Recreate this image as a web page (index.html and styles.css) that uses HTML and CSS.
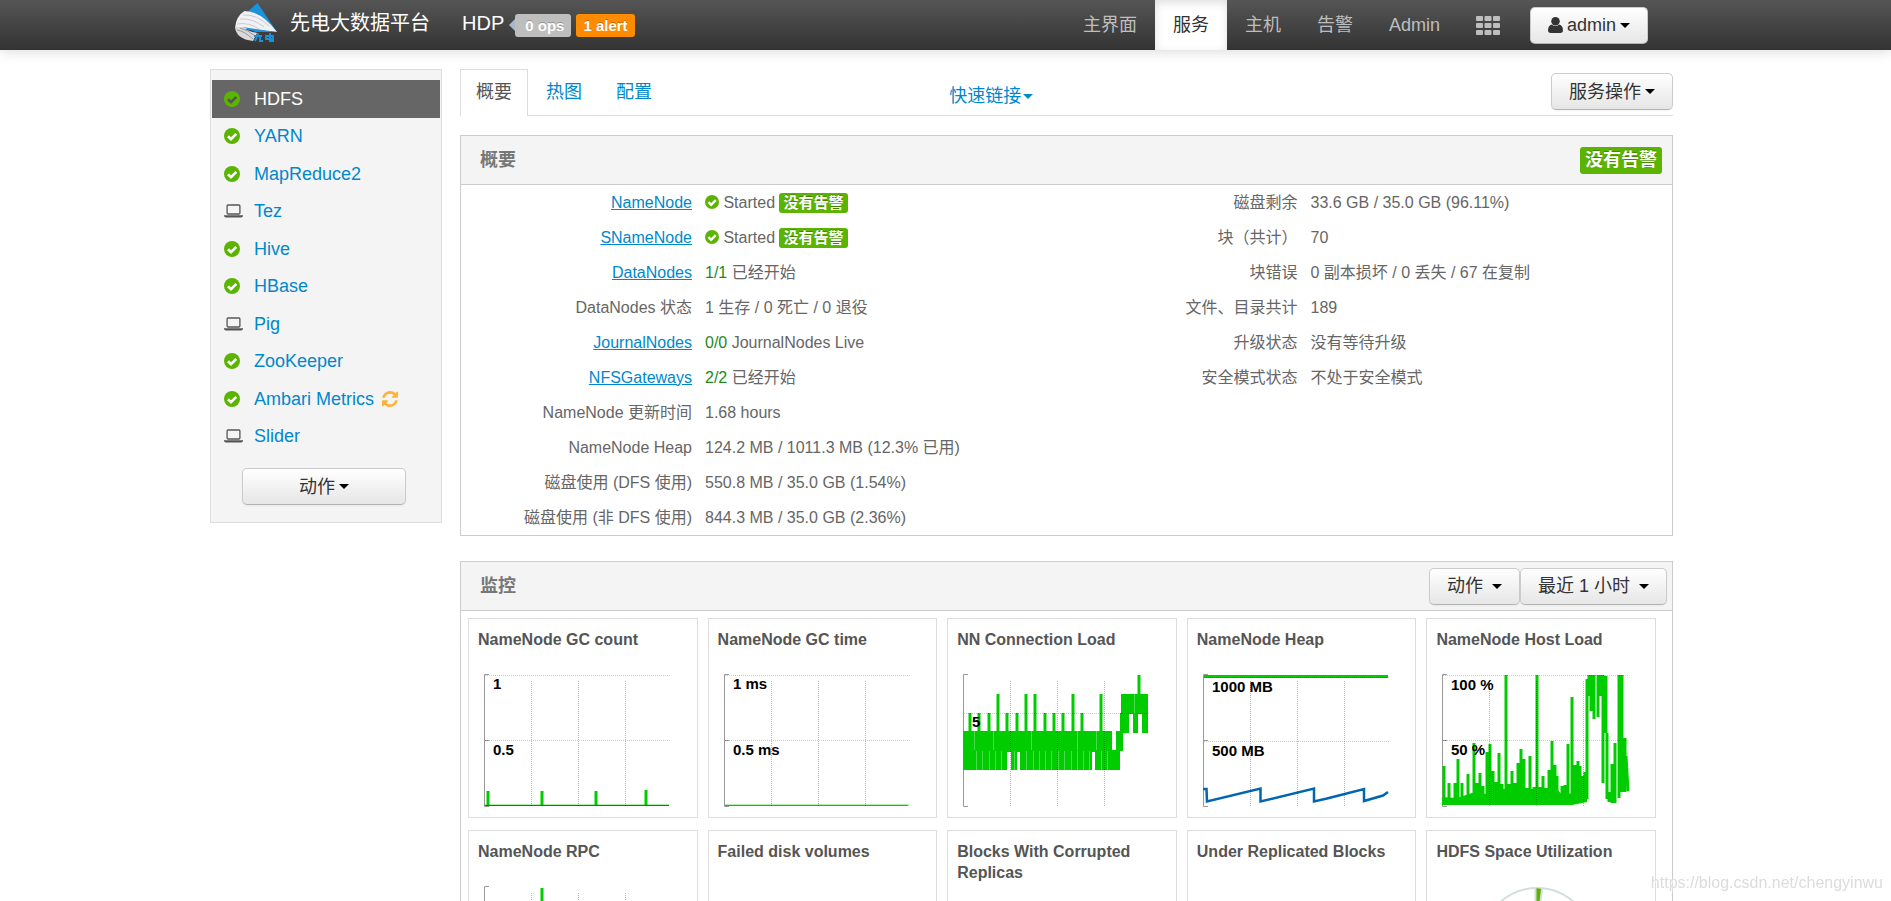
FILE: index.html
```html
<!DOCTYPE html>
<html lang="zh-CN">
<head>
<meta charset="utf-8">
<title>HDFS</title>
<link rel="stylesheet" href="styles.css">
</head>
<body>
<svg class="sprite" aria-hidden="true">
  <symbol id="i-ok" viewBox="0 0 16 16"><circle cx="8" cy="8" r="8" fill="#5ab400"/><path d="M4 8.2 7 11.2 12.3 5.9" fill="none" stroke="currentColor" stroke-width="2.7"/></symbol>
  <symbol id="i-laptop" viewBox="0 0 19 14"><rect x="3.1" y="1" width="12.8" height="9" rx="1" fill="none" stroke="currentColor" stroke-width="1.3"/><path d="M0 11.2h19v.8q-.3 1.4-2 1.4H2q-1.700 0-2-1.400z" fill="currentColor"/></symbol>
  <symbol id="i-refresh" viewBox="0 0 1536 1536"><path fill="currentColor" d="M1511 928q0 5-1 7-64 268-268 434.500t-478 166.500q-146 0-282.500-55t-243.500-157l-129 129q-19 19-45 19t-45-19-19-45v-448q0-26 19-45t45-19h448q26 0 45 19t19 45-19 45l-137 137q71 66 161 102t187 36q134 0 250-65t186-179q11-17 53-117 8-23 30-23h192q13 0 22.500 9.500t9.500 22.500zm25-800v448q0 26-19 45t-45 19h-448q-26 0-45-19t-19-45 19-45l138-138q-148-137-349-137-134 0-250 65t-186 179q-11 17-53 117-8 23-30 23h-199q-13 0-22.500-9.500t-9.500-22.500v-7q65-268 270-434.500t480-166.500q146 0 284 55.500t245 156.500l130-129q19-19 45-19t45 19 19 45z"/></symbol>
  <symbol id="i-user" viewBox="0 0 14 15"><circle cx="7" cy="4" r="4" fill="currentColor"/><path d="M3.500 7Q7 10 10.500 7 14 8 14 12.500 14 15 11.500 15h-9Q0 15 0 12.500 0 8 3.500 7z" fill="currentColor"/></symbol>
  <symbol id="i-grid" viewBox="0 0 24 19"><g fill="currentColor"><rect width="7" height="5" rx="1"/><rect x="8.500" width="7" height="5" rx="1"/><rect x="17" width="7" height="5" rx="1"/><rect y="7" width="7" height="5" rx="1"/><rect x="8.500" y="7" width="7" height="5" rx="1"/><rect x="17" y="7" width="7" height="5" rx="1"/><rect y="14" width="7" height="5" rx="1"/><rect x="8.500" y="14" width="7" height="5" rx="1"/><rect x="17" y="14" width="7" height="5" rx="1"/></g></symbol>
  <symbol id="axis" viewBox="0 0 188 137"><path d="M5 3.500H.5V135.500H5M.5 69.500H5" fill="none" stroke="#999"/></symbol>
  <symbol id="vgrid" viewBox="0 0 188 137"><path d="M47.500 10V135M94.500 10V135M141.500 10V135" fill="none" stroke="#000" stroke-opacity=".3" stroke-dasharray="1 1"/></symbol>
  <symbol id="hgrid" viewBox="0 0 188 137"><path d="M1 4.500H187M1 69.500H187" fill="none" stroke="#000" stroke-opacity=".2" stroke-dasharray="1 1"/></symbol>
</svg>

<header class="navbar">
  <div class="wrap nav-inner">
    <a class="brand" href="#">
      <svg class="logo" viewBox="0 0 42 40" aria-hidden="true">
        <path d="M10 11 22.500 0 42 29 12 24z" fill="#1a93dc"/>
        <path d="M9.500 8Q26 8 42 29L0 25Q1 13 9.500 8z" fill="#f1f1f4"/>
        <path d="M8 12Q22 11 34 23M5 16Q18 15 29 24M2 21Q14 19 24 26" fill="none" stroke="#bfc0c8" stroke-width=".8"/>
        <path d="M7 24 42 29H21z" fill="#1a93dc"/>
        <path d="M0 24Q1 36 18 38L22 30Q12 28 7 24z" fill="#d9d9dc"/>
        <path d="M2 27Q9 28 18 36M5 25Q13 27 20 33" fill="none" stroke="#8f8f96" stroke-width=".9"/>
        <path d="M19 33h8M23 30v4M20 38l2-4M25 34v4h3M31 33h7v3h-7zM35 30v8h4" fill="none" stroke="#1a93dc" stroke-width="1.800"/>
      </svg>
      <span>先电大数据平台</span>
    </a>
    <a class="cluster" href="#">HDP</a>
    <a class="tag tag-ops" href="#">0 ops</a>
    <a class="tag tag-alert" href="#">1 alert</a>
    <nav class="menu">
      <a href="#">主界面</a><a class="active" href="#">服务</a><a href="#">主机</a><a href="#">告警</a><a href="#">Admin</a><a href="#" aria-label="Views"><svg class="grid-icon"><use href="#i-grid"/></svg></a>
    </nav>
    <button class="btn btn-user" type="button"><svg class="user-icon"><use href="#i-user"/></svg><span>admin</span><i class="caret"></i></button>
  </div>
</header>

<div class="wrap page">
  <aside class="sidebar">
    <ul class="services">
      <li class="active"><a href="#"><svg><use href="#i-ok"/></svg>HDFS</a></li>
      <li><a href="#"><svg><use href="#i-ok"/></svg>YARN</a></li>
      <li><a href="#"><svg><use href="#i-ok"/></svg>MapReduce2</a></li>
      <li><a href="#"><svg class="laptop"><use href="#i-laptop"/></svg>Tez</a></li>
      <li><a href="#"><svg><use href="#i-ok"/></svg>Hive</a></li>
      <li><a href="#"><svg><use href="#i-ok"/></svg>HBase</a></li>
      <li><a href="#"><svg class="laptop"><use href="#i-laptop"/></svg>Pig</a></li>
      <li><a href="#"><svg><use href="#i-ok"/></svg>ZooKeeper</a></li>
      <li><a href="#"><svg><use href="#i-ok"/></svg>Ambari Metrics<svg class="refresh"><use href="#i-refresh"/></svg></a></li>
      <li><a href="#"><svg class="laptop"><use href="#i-laptop"/></svg>Slider</a></li>
    </ul>
    <button class="btn btn-side" type="button"><span>动作</span><i class="caret"></i></button>
  </aside>

  <main class="content">
    <div class="tabbar">
      <nav class="tabs"><a class="active" href="#">概要</a><a href="#">热图</a><a href="#">配置</a></nav>
      <div class="tab-tools">
        <a class="quick" href="#">快速链接<i class="caret"></i></a>
        <button class="btn" type="button"><span>服务操作</span><i class="caret"></i></button>
      </div>
    </div>

    <section class="panel">
      <div class="panel-head"><h2>概要</h2><span class="label label-lg">没有告警</span></div>
      <div class="summary">
        <table>
          <tr><th><a href="#">NameNode</a></th><td><svg class="ok"><use href="#i-ok"/></svg> Started <span class="label">没有告警</span></td></tr>
          <tr><th><a href="#">SNameNode</a></th><td><svg class="ok"><use href="#i-ok"/></svg> Started <span class="label">没有告警</span></td></tr>
          <tr><th><a href="#">DataNodes</a></th><td><b>1/1</b> 已经开始</td></tr>
          <tr><th>DataNodes 状态</th><td>1 生存 / 0 死亡 / 0 退役</td></tr>
          <tr><th><a href="#">JournalNodes</a></th><td><b>0/0</b> JournalNodes Live</td></tr>
          <tr><th><a href="#">NFSGateways</a></th><td><b>2/2</b> 已经开始</td></tr>
          <tr><th>NameNode 更新时间</th><td>1.68 hours</td></tr>
          <tr><th>NameNode Heap</th><td>124.2 MB / 1011.3 MB (12.3% 已用)</td></tr>
          <tr><th>磁盘使用 (DFS 使用)</th><td>550.8 MB / 35.0 GB (1.54%)</td></tr>
          <tr><th>磁盘使用 (非 DFS 使用)</th><td>844.3 MB / 35.0 GB (2.36%)</td></tr>
        </table>
        <table>
          <tr><th>磁盘剩余</th><td>33.6 GB / 35.0 GB (96.11%)</td></tr>
          <tr><th>块（共计）</th><td>70</td></tr>
          <tr><th>块错误</th><td>0 副本损坏 / 0 丢失 / 67 在复制</td></tr>
          <tr><th>文件、目录共计</th><td>189</td></tr>
          <tr><th>升级状态</th><td>没有等待升级</td></tr>
          <tr><th>安全模式状态</th><td>不处于安全模式</td></tr>
        </table>
      </div>
    </section>

    <section class="panel">
      <div class="panel-head panel-head-tools"><h2>监控</h2>
        <div class="tools">
          <button class="btn btn-wide" type="button"><span>动作</span><i class="caret"></i></button><button class="btn btn-wide" type="button"><span>最近 1 小时</span><i class="caret"></i></button>
        </div>
      </div>
      <div class="cards">
        <article class="card"><h3>NameNode GC count</h3>
          <svg class="chart" viewBox="0 0 188 137">
            <use href="#axis"/>
            <path class="g3" d="M4 120V134M58 120V134M112 120V134M162 119V134"/>
            <path class="halo" d="M1 134H185"/><path d="M1 134.500H185" stroke="#0066b3"/>
            <use href="#hgrid"/><use href="#vgrid"/>
            <text x="9" y="18">1</text><text x="9" y="84">0.5</text>
          </svg></article>
        <article class="card"><h3>NameNode GC time</h3>
          <svg class="chart" viewBox="0 0 188 137">
            <use href="#axis"/>
            <path class="halo" d="M1 134H185"/><path d="M1 134.500H184" stroke="#00cc00"/>
            <use href="#hgrid"/><use href="#vgrid"/>
            <text x="9" y="18">1 ms</text><text x="9" y="84">0.5 ms</text>
          </svg></article>
        <article class="card"><h3>NN Connection Load</h3>
          <svg class="chart" viewBox="0 0 188 137">
            <use href="#axis"/>
            <path fill="#00cc00" d="M0 60H149V79H153V60H157V42H158V23H185V43H185V62H179V43H175V62H170V43H166V62H160V80H157V99H132V81H129V99H57V81H54V99H48V81H44V99H0z"/>
            <path class="g3" d="M7 42V61M16 42V61M26 42V61M35 23V61M44 42V61M54 42V61M63 23V61M72 23V61M82 42V61M91 42V61M100 42V61M110 23V61M119 42V61M138 23V61M176 4V24"/>
            <path d="M11.500 60V79M30.500 60V79M68.500 60V79M114.500 60V79M133.500 60V79M171.500 23V43M13.500 80V99M19.500 80V99M26.500 80V99M32.500 80V99M38.500 80V99M51.500 80V99M63.500 80V99M70.500 80V99M76.500 80V99M82.500 80V99M88.500 80V99M95.500 80V99M101.500 80V99M108.500 80V99M114.500 80V99M120.500 80V99M126.500 80V99M138.500 80V99M144.500 80V99" stroke="#fff" stroke-opacity=".3"/>
            <path d="M1 42.500H187" stroke="#000" stroke-opacity=".2" stroke-dasharray="1 1"/><use href="#vgrid"/>
            <text x="9" y="56">5</text>
          </svg></article>
        <article class="card"><h3>NameNode Heap</h3>
          <svg class="chart" viewBox="0 0 188 137">
            <use href="#axis"/>
            <path d="M1 5.500H185" stroke="#00cc00" stroke-width="3"/>
            <path d="M0 118H3.500L4 130.500 57.500 117.500V130.500L111 117.500V130.500L124 127.500 161 118V130L180 124.500 185 121" fill="none" stroke="#0066b3" stroke-width="2.500"/>
            <path d="M1 6.500H187M1 70.500H187" stroke="#000" stroke-opacity=".2" stroke-dasharray="1 1"/><use href="#vgrid"/>
            <text x="9" y="21">1000 MB</text><text x="9" y="85">500 MB</text>
          </svg></article>
        <article class="card"><h3>NameNode Host Load</h3>
          <svg class="chart" viewBox="0 0 188 137">
            <use href="#axis"/>
            <path fill="#00cc00" d="M0 126 15 127 30 122 45 123 60 118H115L121 125 130 122 145 112V131L130 134H0z"/>
            <path class="g3" d="M2 95V134M7 112V134M13 112V134M16 88V134M20 112V134M26 103V134M32 72V134M35 112V134M38 102V134M41 115V134M45 81V134M48 73V134M51 100V134M54 111V134M57 82V134M60 113V134M64 4V134M67 113V134M70 100V134M73 112V134M76 92V134M79 78V134M82 88V134M85 117V134M88 85V134M92 116V134M95 4V134M98 116V134M101 105V134M104 117V134M107 99V134M110 70V134M113 94V134M115 105V134M120 115V134M123 114V134M126 73V134M130 26V130M133 94V130M136 90V132M138 95V132M141 105V131M143 101V128M145 8V128M147 4V25M149 4V40M152 4V48M156 4V46M159 4V25M161 4V112M164 5V62M165 62V128M167 121V131M170 93V132M173 72V132M177 4V127M180 4V121M183 67V121"/>
            <path d="M184 85 186 120" stroke="#00cc00" stroke-width="3"/>
            <use href="#hgrid"/><use href="#vgrid"/>
            <text x="9" y="19">100 %</text><text x="9" y="84">50 %</text>
          </svg></article>
        <article class="card"><h3>NameNode RPC</h3>
          <svg class="chart" viewBox="0 0 188 137"><use href="#axis"/><path class="g3" d="M58 5V134"/><use href="#vgrid"/></svg></article>
        <article class="card"><h3>Failed disk volumes</h3></article>
        <article class="card"><h3>Blocks With Corrupted Replicas</h3></article>
        <article class="card"><h3>Under Replicated Blocks</h3></article>
        <article class="card"><h3>HDFS Space Utilization</h3>
          <svg class="chart" viewBox="0 0 188 137"><circle cx="95" cy="60" r="55" fill="none" stroke="#d5dddd" stroke-width="2"/><path d="M93.500 5V60L100 6" fill="#5ab400" stroke="#d5dddd" stroke-width="2"/></svg></article>
      </div>
    </section>
  </main>
</div>
<div class="watermark">https://blog.csdn.net/chengyinwu</div>
</body>
</html>
```
FILE: styles.css
```css
* { box-sizing: border-box; }
body {
  margin: 0;
  padding-right: 8px;
  background: #fff;
  color: #666;
  font: 16px/20px "Liberation Sans", "Noto Sans CJK SC", sans-serif;
  overflow-x: hidden;
}
a { color: #0088cc; text-decoration: none; }
ul { list-style: none; margin: 0; padding: 0; }
h2, h3 { margin: 0; }
.sprite { display: none; }
.wrap { max-width: 1463px; margin: 0 auto; }

.navbar {
  margin-right: -8px;
  padding-right: 8px;
  background: linear-gradient(#555, #333);
  box-shadow: 0 1px 12px rgba(0, 0, 0, .16);
}
.nav-inner { display: flex; align-items: center; height: 50px; padding: 0 25px; }
.brand { display: flex; align-items: center; gap: 13px; color: #fff; font-size: 20px; line-height: 28px; }
.logo { width: 42px; height: 40px; margin-bottom: 4px; }
.brand span, .cluster { padding-bottom: 4px; }
.cluster { margin: 0 11px 0 32px; color: #fff; font-size: 20px; line-height: 28px; }
.tag {
  position: relative;
  padding: 0 7px;
  border-radius: 3px;
  color: #fff;
  font-size: 15px;
  font-weight: bold;
  line-height: 23px;
  text-shadow: 0 -1px 0 rgba(0, 0, 0, .25);
}
.tag-ops { padding: 0 7px 0 10px; margin-right: 5px; background: #bebebe; }
.tag-ops::before {
  content: "";
  position: absolute;
  left: -6px;
  top: 5px;
  border: 6px solid transparent;
  border-left: 0;
  border-right-color: #a9b9c9;
}
.tag-alert { background: #ff8c00; }
.menu { display: flex; margin-left: auto; margin-right: 12px; }
.menu a { display: flex; align-items: center; height: 50px; padding: 0 18px; color: #bebebe; font-size: 18px; line-height: 24px; }
.menu a.active { background: #fff; color: #333; box-shadow: inset 0 3px 8px rgba(0, 0, 0, .125); }
.grid-icon { width: 24px; height: 19px; }

.btn {
  display: inline-flex;
  align-items: center;
  justify-content: center;
  gap: 4px;
  height: 37px;
  padding: 0 17px;
  border: 1px solid #ccc;
  border-bottom-color: #b3b3b3;
  border-radius: 5px;
  background: linear-gradient(#fff, #e6e6e6);
  box-shadow: 0 1px 2px rgba(0, 0, 0, .05);
  color: #333;
  font: 18px/24px "Liberation Sans", "Noto Sans CJK SC", sans-serif;
}
.caret { border: 5px solid transparent; border-top-color: #000; border-bottom: 0; }
.user-icon { width: 15px; height: 16px; }
.btn-wide { gap: 9px; }

.page { display: flex; align-items: flex-start; gap: 18px; padding-top: 19px; }
.sidebar { flex: none; width: 232px; padding: 10px 1px 17px; border: 1px solid #ddd; background: #f4f4f4; }
.services { display: grid; grid-auto-rows: 1fr; height: 375px; }
.services a { display: flex; align-items: center; height: 100%; padding-left: 12px; font-size: 18px; line-height: 20px; }
.services svg { width: 16px; height: 16px; margin-right: 14px; color: #fff; }
.services svg.laptop { width: 19px; height: 14px; margin-right: 11px; color: #555; }
.services svg.refresh { margin: 0 0 0 8px; color: #fdb338; }
.services .active a { background: #666; color: #fff; }
.services .active svg { color: #555; }
.btn-side { display: flex; width: 164px; margin: 13px auto 0 30px; }

.content { flex: 1; min-width: 0; }
.tabbar { display: grid; grid-template-columns: 2fr 3fr; height: 47px; border-bottom: 1px solid #ddd; font-size: 18px; line-height: 24px; }
.tabs { display: flex; gap: 2px; margin-bottom: -1px; }
.tabs a { padding: 10px 15px; border: 1px solid transparent; }
.tabs a.active { border-color: #ddd; border-bottom: 0; background: #fff; color: #555; }
.tab-tools { display: flex; justify-content: space-between; align-items: flex-start; padding: 4px 0 0 4px; }
.quick { display: flex; align-items: center; gap: 2px; padding-top: 11px; }
.quick .caret { border-top-color: #0088cc; }

.panel { margin-top: 19px; border: 1px solid #ccc; }
.panel + .panel { margin-top: 25px; }
.panel-head { display: flex; align-items: center; justify-content: space-between; height: 49px; padding: 0 10px 0 19px; border-bottom: 1px solid #ccc; background: #f4f4f4; }
.panel-head-tools { padding-right: 5px; }
.panel-head h2 { color: #777; font-size: 18px; line-height: 24px; }
.tools { display: flex; }
.label { display: inline-block; padding: 0 4px; border-radius: 3px; background: #5ab400; color: #fff; font-size: 15px; font-weight: bold; line-height: 20px; text-shadow: 0 -1px 0 rgba(0, 0, 0, .25); }
.label-lg { padding: 0 5px; font-size: 18px; line-height: 27px; }

.summary { display: grid; grid-template-columns: 1fr 1fr; align-items: start; }
.summary table { border-spacing: 0; }
.summary th { width: 231px; padding: 0; font-weight: normal; text-align: right; }
.summary td { padding: 0 0 0 13px; }
.summary tr { height: 35px; }
.summary a { text-decoration: underline; }
.summary b { color: #1e8a1e; font-weight: normal; }
.ok { width: 14px; height: 14px; vertical-align: -1px; color: #fff; }

.cards { display: grid; grid-template-columns: repeat(5, 1fr); gap: 12px 10px; padding: 7px 16px 20px 7px; }
.card { min-height: 200px; padding: 10px 9px 9px; border: 1px solid #ddd; }
.card h3 { min-height: 42px; color: #555; font-size: 16px; line-height: 21px; }
.chart { display: block; width: 188px; height: 137px; margin-left: 6px; fill: none; }
.chart text { fill: #000; font-size: 15px; font-weight: bold; }
.g3 { stroke: #00cc00; stroke-width: 3; }
.halo { stroke: #00cc00; stroke-opacity: .3; stroke-width: 2; }

.watermark { position: fixed; right: 8px; bottom: 8px; color: #dcdcdc; line-height: 20px; text-shadow: 1px 1px 1px #fff; }
```
